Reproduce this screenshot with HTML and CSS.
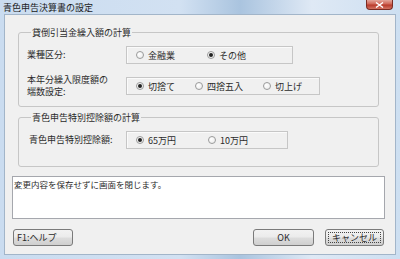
FILE: index.html
```html
<!DOCTYPE html>
<html lang="ja">
<head>
  <meta charset="UTF-8">
  <title>青色申告決算書の設定</title>
  <link rel="stylesheet" href="styles.css">
</head>
<body>
  <div class="window">
    <!-- Title bar -->
    <div class="titlebar">
      <span class="title">青色申告決算書の設定</span>
      <span class="close-btn">
        <svg width="9" height="6" viewBox="0 0 9 6"><path d="M1 0.5 L8 5.5 M8 0.5 L1 5.5" stroke="#fff" stroke-width="1.4"/></svg>
      </span>
    </div>

    <div class="panel">
      <!-- 貸倒引当金 -->
      <fieldset class="group group-first">
        <legend>貸倒引当金繰入額の計算</legend>
        <div class="row">
          <div class="label">業種区分:</div>
          <div class="optbox optbox-a">
            <span class="opt"><span class="radio"></span>金融業</span>
            <span class="opt"><span class="radio checked"></span>その他</span>
          </div>
        </div>
        <div class="row row-second">
          <div class="label">本年分繰入限度額の<br>端数設定:</div>
          <div class="optbox optbox-b">
            <span class="opt"><span class="radio checked"></span>切捨て</span>
            <span class="opt"><span class="radio"></span>四捨五入</span>
            <span class="opt"><span class="radio"></span>切上げ</span>
          </div>
        </div>
      </fieldset>

      <!-- 青色申告特別控除 -->
      <fieldset class="group group-second">
        <legend>青色申告特別控除額の計算</legend>
        <div class="row">
          <div class="label label-indent">青色申告特別控除額:</div>
          <div class="optbox optbox-c">
            <span class="opt"><span class="radio checked"></span>65万円</span>
            <span class="opt"><span class="radio"></span>10万円</span>
          </div>
        </div>
      </fieldset>

      <div class="message">変更内容を保存せずに画面を閉じます。</div>

      <div class="buttons">
        <button class="btn btn-help">F1:ヘルプ</button>
        <span class="spacer"></span>
        <button class="btn btn-ok">OK</button>
        <button class="btn btn-cancel">キャンセル</button>
      </div>
    </div>
  </div>
</body>
</html>
```

FILE: styles.css
```css
:root {
  --frame: #c8dbef;
  --face: #f0f0f0;
  --line: #c6c6c6;
  --text: #2a2a2a;
}
body {
  margin: 0;
  font-family: "Noto Sans CJK JP", "Noto Sans", sans-serif;
  font-size: 9px;
  color: var(--text);
  overflow: hidden;
}
.window {
  width: 400px;
  height: 259px;
  display: flex;
  flex-direction: column;
  background: linear-gradient(90deg, #cadcf0 0%, #d2e1f2 45%, #aac4df 60%, #dfe9f5 78%, #cddff1 100%);
}
/* Title bar */
.titlebar {
  height: 14px;
  display: flex;
  align-items: flex-start;
}
.title {
  margin: 2px 0 0 3px;
  line-height: 11px;
  color: #1a1a1a;
}
.close-btn {
  margin-left: auto;
  margin-right: 7px;
  width: 27px;
  height: 10px;
  box-sizing: border-box;
  border: 1px solid #7b2b22;
  border-top: none;
  border-radius: 0 0 4px 4px;
  background: linear-gradient(#e4a69b 0%, #cf6556 45%, #b83a2b 55%, #d27261 100%);
  display: flex;
  align-items: center;
  justify-content: center;
}
/* Dialog face */
.panel {
  flex: 1;
  margin: 0 4px 4px 4px;
  border: 1px solid #a2b5c9;
  background: var(--face);
  display: flex;
  flex-direction: column;
}
.group {
  margin: 0 16px 0 13px;
  padding: 8px 0 8px 8px;
  border: 1px solid var(--line);
  border-radius: 3px;
  min-width: 0;
}
.group legend {
  padding: 0 1px;
  margin-left: 4px;
  line-height: 11px;
}
.group-first {
  margin-top: 12px;
}
.group-second {
  margin-top: 5px;
  padding-bottom: 17px;
}
.row {
  display: grid;
  grid-template-columns: 99px auto;
  align-items: center;
  justify-items: start;
}
.row-second {
  margin-top: 10px;
}
.label {
  line-height: 12px;
}
.label-indent {
  padding-left: 2px;
}
/* Option frames */
.optbox {
  height: 18px;
  box-sizing: border-box;
  border: 1px solid var(--line);
  box-shadow: inset 1px 1px 0 #fafafa;
  display: flex;
  align-items: center;
  padding-left: 9px;
  gap: 32px;
}
.optbox-a { width: 167px; }
.optbox-b { width: 194px; gap: 20px; }
.optbox-c { width: 162px; }
.opt {
  display: flex;
  align-items: center;
  gap: 4px;
  line-height: 11px;
}
.radio {
  width: 8px;
  height: 8px;
  box-sizing: border-box;
  border-radius: 50%;
  border: 1px solid #9a9b9b;
  background: radial-gradient(circle at 35% 35%, #fff 0%, #e9e9e9 100%);
  display: flex;
  align-items: center;
  justify-content: center;
}
.radio.checked::after {
  content: "";
  width: 4px;
  height: 4px;
  border-radius: 50%;
  background: #222;
}
/* Message box */
.message {
  margin: 9px 10px 0 7px;
  height: 43px;
  box-sizing: border-box;
  border: 1px solid #a5a7ad;
  background: #fff;
  padding: 2px 0 0 1px;
  line-height: 11px;
  font-size: 8.5px;
}
/* Buttons */
.buttons {
  display: flex;
  margin: 10px 11px 0 8px;
  gap: 11px;
}
.spacer {
  flex: 1;
}
.btn {
  height: 17px;
  width: 60px;
  box-sizing: border-box;
  border: 1px solid #7a7a7a;
  border-radius: 3px;
  background: linear-gradient(#f2f2f2 0%, #ebebeb 48%, #dddddd 52%, #cfcfcf 100%);
  font-family: inherit;
  font-size: 9px;
  line-height: 11px;
  padding: 0;
  color: var(--text);
}
.btn-help {
  text-align: left;
  padding-left: 3px;
}
.btn-ok {
  width: 61px;
}
.btn-cancel {
  width: 59px;
  outline: 1px dotted #444;
  outline-offset: -4px;
}
```
